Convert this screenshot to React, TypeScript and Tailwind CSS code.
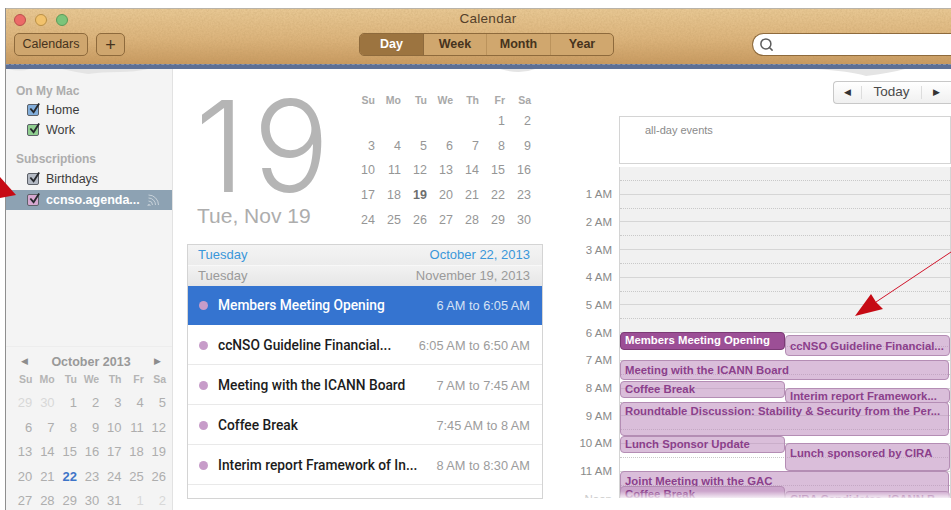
import { Search } from "lucide-react";

const sans = "font-['Liberation_Sans',Arial,sans-serif]";

const bigMonth = [
  ["", "", "", "", "", "1", "2"],
  ["3", "4", "5", "6", "7", "8", "9"],
  ["10", "11", "12", "13", "14", "15", "16"],
  ["17", "18", "19", "20", "21", "22", "23"],
  ["24", "25", "26", "27", "28", "29", "30"],
];

const october = [
  ["29", "30", "1", "2", "3", "4", "5"],
  ["6", "7", "8", "9", "10", "11", "12"],
  ["13", "14", "15", "16", "17", "18", "19"],
  ["20", "21", "22", "23", "24", "25", "26"],
  ["27", "28", "29", "30", "31", "1", "2"],
];

const weekDays = ["Su", "Mo", "Tu", "We", "Th", "Fr", "Sa"];

const agenda = [
  { title: "ccNSO Guideline Financial...", time: "6:05 AM to 6:50 AM" },
  { title: "Meeting with the ICANN Board", time: "7 AM to 7:45 AM" },
  { title: "Coffee Break", time: "7:45 AM to 8 AM" },
  { title: "Interim report Framework of In...", time: "8 AM to 8:30 AM" },
];

const hours = ["1 AM", "2 AM", "3 AM", "4 AM", "5 AM", "6 AM", "7 AM", "8 AM", "9 AM", "10 AM", "11 AM", "Noon"];

// top/height are px from midnight, lane is left, right or full
const events = [
  { title: "ccNSO Guideline Financial...", top: 168, h: 21, lane: "right", pt: 3 },
  { title: "Meeting with the ICANN Board", top: 193, h: 20, lane: "full", pt: 2 },
  { title: "Coffee Break", top: 214, h: 17, lane: "left", pt: 0 },
  { title: "Interim report Framework...", top: 221, h: 15, lane: "right", pt: 0 },
  { title: "Roundtable Discussion: Stability & Security from the Per...", top: 235, h: 34, lane: "full", pt: 1 },
  { title: "Lunch Sponsor Update", top: 269, h: 17, lane: "left", pt: 0 },
  { title: "Lunch sponsored by CIRA", top: 276, h: 28, lane: "right", pt: 2 },
  { title: "Joint Meeting with the GAC", top: 304, h: 40, lane: "full", pt: 2 },
  { title: "Coffee Break", top: 319, h: 20, lane: "left", pt: 0 },
  { title: "CIRA Candidates, ICANN B...", top: 324, h: 20, lane: "right", pt: 0 },
];

function Check({ tint }: { tint: string }) {
  return (
    <span className={`relative block w-[12px] h-[12px] rounded-[2px] border border-[#5d6168] ${tint}`}>
      <svg viewBox="0 0 14 14" className="absolute left-[0px] top-[-3px] w-[13px] h-[13px]">
        <path d="M2.5 7 L6 11 L12 1.5" fill="none" stroke="#26282c" strokeWidth="2" />
      </svg>
    </span>
  );
}

function CalendarRow({ label, tint }: { label: string; tint: string }) {
  return (
    <div className="flex items-center h-5 pl-[21px] gap-[7px] text-[12.5px] text-[#3c3c3c]">
      <Check tint={tint} />
      <span>{label}</span>
    </div>
  );
}

function Toolbar() {
  return (
    <header className="relative shrink-0 h-[61px] bg-gradient-to-b from-[#e8c894] via-[#dcb47c] to-[#c4955b] border-t border-[#b9b3a8]">
      {/* grain of the leather */}
      <svg className="absolute inset-0 w-full h-full opacity-25">
        <filter id="grain">
          <feTurbulence type="fractalNoise" baseFrequency="0.55" numOctaves="3" />
          <feColorMatrix values="0 0 0 0 0.45  0 0 0 0 0.28  0 0 0 0 0.1  0 0 0 1.6 -0.5" />
        </filter>
        <rect width="100%" height="100%" filter="url(#grain)" />
      </svg>
      <div className="relative h-[56px]">
        <div className="relative flex items-center h-[21px] pl-[8px] gap-[9px]">
          <span className="w-[12px] h-[12px] rounded-full bg-[#ec6a67] border border-[#b8504c]" />
          <span className="w-[12px] h-[12px] rounded-full bg-[#f2c26c] border border-[#b98f45]" />
          <span className="w-[12px] h-[12px] rounded-full bg-[#7cc47a] border border-[#5b9a58]" />
          <span className="absolute left-0 right-0 pl-[19px] text-center text-[13.5px] tracking-[0.3px] text-[#54402a]">
            Calendar
          </span>
        </div>
        <div className="flex items-center h-[23px] mt-[3px] pl-[8px] text-[12.5px] text-[#46331d]">
          <button className="w-[74px] h-[23px] rounded-[5px] border border-[#8e6a3c] bg-[#cfa66e]">Calendars</button>
          <button className="ml-[8px] w-[29px] h-[23px] rounded-[5px] border border-[#8e6a3c] bg-[#cfa66e] text-[18px] leading-none">+</button>
          <div className="ml-[234px] flex w-[255px] h-[23px] rounded-[5px] border border-[#8e6a3c] bg-[#d0a76e] overflow-hidden font-bold">
            <span className="flex items-center justify-center w-[63px] bg-[#9c7440] text-white">Day</span>
            <span className="flex items-center justify-center w-[63px] border-l border-[#8e6a3c]">Week</span>
            <span className="flex items-center justify-center w-[64px] border-l border-[#bb935c]">Month</span>
            <span className="flex items-center justify-center flex-1 border-l border-[#bb935c]">Year</span>
          </div>
          <div className="ml-[138px] flex items-center flex-1 h-[23px] pl-[6px] rounded-l-full border border-r-0 border-[#8e6a3c] bg-white">
            <Search size={15} strokeWidth={2.4} className="text-[#5c5c5c]" />
          </div>
        </div>
      </div>
      {/* stitched edge */}
      <div className="absolute left-0 right-0 bottom-0 h-[5px] bg-[#5c6f95] border-t border-dashed border-[#8794ad]" />
    </header>
  );
}

function Sidebar() {
  return (
    <aside className="shrink-0 w-[167px] h-full bg-[#f4f4f4] border-r border-[#e2e2e2] pt-[13px]">
      <div className="h-[18px] pl-[10px] text-[12px] font-bold text-[#adadad]">On My Mac</div>
      <CalendarRow label="Home" tint="bg-[#82aedb]" />
      <CalendarRow label="Work" tint="bg-[#8fce8f]" />
      <div className="mt-[10px] h-[19px] pl-[10px] text-[12px] font-bold text-[#adadad]">Subscriptions</div>
      <CalendarRow label="Birthdays" tint="bg-[#b4bac4]" />
      <div className="flex items-center h-[20px] mt-px pl-[21px] gap-[7px] bg-[#8da2b3] text-[12.5px] font-bold text-white">
        <Check tint="bg-[#d6a8d0]" />
        <span>ccnso.agenda...</span>
        <svg viewBox="0 0 12 12" className="w-[12px] h-[12px] text-[#c8d2da]">
          <path d="M2 10.5 a1 1 0 1 0 .1 0 M1.5 7 A4 4 0 0 1 5.5 11 M1.5 4 A7 7 0 0 1 8.5 11 M1.5 1 A10 10 0 0 1 11.5 11" fill="none" stroke="currentColor" strokeWidth="1" />
        </svg>
      </div>
      <div className="mt-[136px] border-t border-[#ededed] pt-[8px] pl-[4px] w-[166px]">
        <div className="flex items-center justify-between h-[14px] pl-[11px] pr-[11px] text-[9px] text-[#8c8c8c]">
          <span>◀</span>
          <span className="text-[12.5px] font-bold text-[#999999]">October 2013</span>
          <span>▶</span>
        </div>
        <div className="grid grid-cols-[repeat(7,22.3px)] mt-[3px] h-[14px] text-[10.5px] font-bold text-[#b5b5b5] text-right">
          {weekDays.map((d) => (
            <span key={d}>{d}</span>
          ))}
        </div>
        <div className="grid grid-cols-[repeat(7,22.3px)] auto-rows-[24.4px] mt-[5px] text-[13px] text-right items-center">
          {october.flat().map((d, i) => {
            const faded = i < 2 || i > 32;
            const today = i === 23;
            return (
              <span
                key={i}
                className={today ? "font-bold text-[#3e74c8]" : faded ? "text-[#d8d8d8]" : "text-[#aeaeae]"}
              >
                {d}
              </span>
            );
          })}
        </div>
      </div>
    </aside>
  );
}

function DayColumn() {
  return (
    <section className="shrink-0 w-[386px] pl-[14px]">
      <div className="flex h-[175px]">
        <div className="w-[162px]">
          <div className="mt-[11px] h-[124px] pl-[8px] font-['Inter',sans-serif] font-light text-[127px] leading-[132px] tracking-[8px] text-[#b5b5b5]">19</div>
          <div className="pl-[10px] text-[21px] leading-[24px] text-[#adadad]">Tue, Nov 19</div>
        </div>
        <div className="pt-[22px]">
          <div className="grid grid-cols-[repeat(7,26px)] h-5 items-center text-[10.5px] font-bold text-[#a8a8a8] text-right">
            {weekDays.map((d) => (
              <span key={d}>{d}</span>
            ))}
          </div>
          <div className="grid grid-cols-[repeat(7,26px)] auto-rows-[24.7px] -mt-[2px] items-center text-[12.5px] text-right text-[#969696]">
            {bigMonth.flat().map((d, i) => (
              <span key={i} className={d === "19" ? "font-bold text-[#6e6e6e]" : ""}>
                {d}
              </span>
            ))}
          </div>
        </div>
      </div>
      <div className="w-[356px] h-[255px] border border-[#d4d4d4]">
        <div className="flex items-center justify-between h-[20px] px-[10px] bg-gradient-to-b from-[#f4f4f4] to-[#ececec] text-[13px] text-[#3a97da]">
          <span>Tuesday</span>
          <span className="pr-[2px]">October 22, 2013</span>
        </div>
        <div className="flex items-center justify-between h-[21px] px-[10px] border-t border-[#f8f8f8] bg-gradient-to-b from-[#f2f2f2] to-[#e6e6e6] text-[13px] text-[#9a9a9a]">
          <span>Tuesday</span>
          <span className="pr-[2px]">November 19, 2013</span>
        </div>
        <div className="flex items-center h-[39px] pl-[11px] pr-[12px] bg-[#3574d0]">
          <span className="w-[9px] h-[9px] rounded-full bg-[#c79cc9]" />
          <span className="ml-[10px] flex-1 font-['Roboto',sans-serif] font-medium text-[13.75px] text-white">Members Meeting Opening</span>
          <span className="text-[12.75px] text-[#d5e2f5]">6 AM to 6:05 AM</span>
        </div>
        {agenda.map((a) => (
          <div key={a.title} className="flex items-center h-[40px] pt-[2px] pl-[11px] pr-[12px] border-b border-[#e9e9e9]">
            <span className="w-[9px] h-[9px] rounded-full bg-[#c79cc9]" />
            <span className="ml-[10px] flex-1 font-['Roboto',sans-serif] font-medium text-[13.75px] text-[#1c1c1c]">{a.title}</span>
            <span className="text-[12.75px] text-[#9c9c9c]">{a.time}</span>
          </div>
        ))}
      </div>
    </section>
  );
}

function EventBlock({ e }: { e: (typeof events)[number] }) {
  const left = e.lane === "right" ? 165 : 0;
  const width = e.lane === "full" ? 329 : 165;
  return (
    <div
      className="absolute overflow-hidden rounded-[4px] border border-[#b48db4] bg-[#c292c2]/60 pl-[4px] text-[11.35px] font-bold leading-[15px] text-[#8b3f8b] whitespace-nowrap"
      style={{ top: e.top, height: e.h, left, width, paddingTop: e.pt }}
    >
      {e.title}
    </div>
  );
}

function Timeline() {
  return (
    <section className="flex-1 min-w-0 flex flex-col">
      <div className="shrink-0 flex justify-end pt-[12px] h-[47px]">
        <div className="flex items-center w-[118px] h-[23px] rounded-l-[4px] border border-r-0 border-[#c8c8c8] bg-gradient-to-b from-[#ffffff] to-[#f0f0f0] text-[13.5px] text-[#4a4a4a]">
          <span className="w-[28px] text-center text-[9px] text-[#333333] border-r border-[#dddddd]">◀</span>
          <span className="flex-1 text-center">Today</span>
          <span className="w-[30px] text-center text-[9px] text-[#333333] border-l border-[#dddddd]">▶</span>
        </div>
      </div>
      <div className="flex">
        <div className="w-[60px] mt-[51px] h-[331px] overflow-hidden pt-[14px]">
          {hours.map((h) => (
            <div
              key={h}
              className={`flex items-center justify-end h-[27.7px] pr-[7px] text-[11.5px] ${h === "Noon" ? "text-[#cccccc]" : "text-[#8a8a8a]"}`}
            >
              {h}
            </div>
          ))}
        </div>
        <div className="flex-1 min-w-0">
          <div className="h-[48px] border border-[#d4d4d4] bg-white pl-[25px] pt-[5px] text-[11px] text-[#8a8a8a]">
            all-day events
          </div>
          <div className="relative mt-[3px] h-[331px] overflow-hidden border-x border-[#d4d4d4]">
            {hours.map((h, i) => (
              <div
                key={h}
                className={`h-[27.7px] border-b border-[#d6d6d6] ${i < 6 ? "bg-[#f1f1f1]" : "bg-white"}`}
              >
                <div className="h-[14px] border-b border-dotted border-[#c9c9c9]" />
              </div>
            ))}
            <div className="absolute left-0 top-[165px] w-[165px] h-[18px] overflow-hidden rounded-[4px] border border-[#7b3a75] bg-[#9c4f96] pl-[4px] text-[11.35px] font-bold leading-[14px] text-white whitespace-nowrap">
              Members Meeting Opening
            </div>
            {events.map((e) => (
              <EventBlock key={e.title + e.top} e={e} />
            ))}
            {/* scroll fade at the bottom of the day */}
            <div className="absolute left-0 right-0 bottom-0 h-[7px] bg-gradient-to-b from-white/0 to-white/80" />
          </div>
        </div>
      </div>
    </section>
  );
}

export default function App() {
  return (
    <div className={`relative w-[951px] h-[510px] overflow-hidden bg-white pl-[5px] pt-[8px] ${sans}`}>
      <div className="flex flex-col h-[502px] border-l border-[#8f8f8f]">
        <Toolbar />
        <div className="flex flex-1 min-h-0">
          <Sidebar />
          <DayColumn />
          <Timeline />
        </div>
      </div>

      {/* torn paper under the toolbar */}
      <svg className="absolute left-0 top-[69px] w-[951px] h-[8px]" viewBox="0 0 951 8">
        <path d="M8 0 Q20 3 30 0 Z M62 0 Q75 3 88 5 Q100 3 120 3 Q135 3 148 0 Z M500 0 Q520 6 535 0 Z M815 0 Q850 2 866 7 Q890 4 905 0 Z" fill="#e4e4e4" />
      </svg>

      {/* red annotation arrows */}
      <svg className="absolute inset-0 w-[951px] h-[510px] pointer-events-none" viewBox="0 0 951 510">
        <path d="M0 177 L16 195 L0 198 Z" fill="#c60a14" />
        <path d="M951 252 L876 302" stroke="#d0142a" strokeWidth="1" />
        <path d="M855 316 L871 294 L876 302 L883 309 Z" fill="#c60a14" />
      </svg>
    </div>
  );
}
